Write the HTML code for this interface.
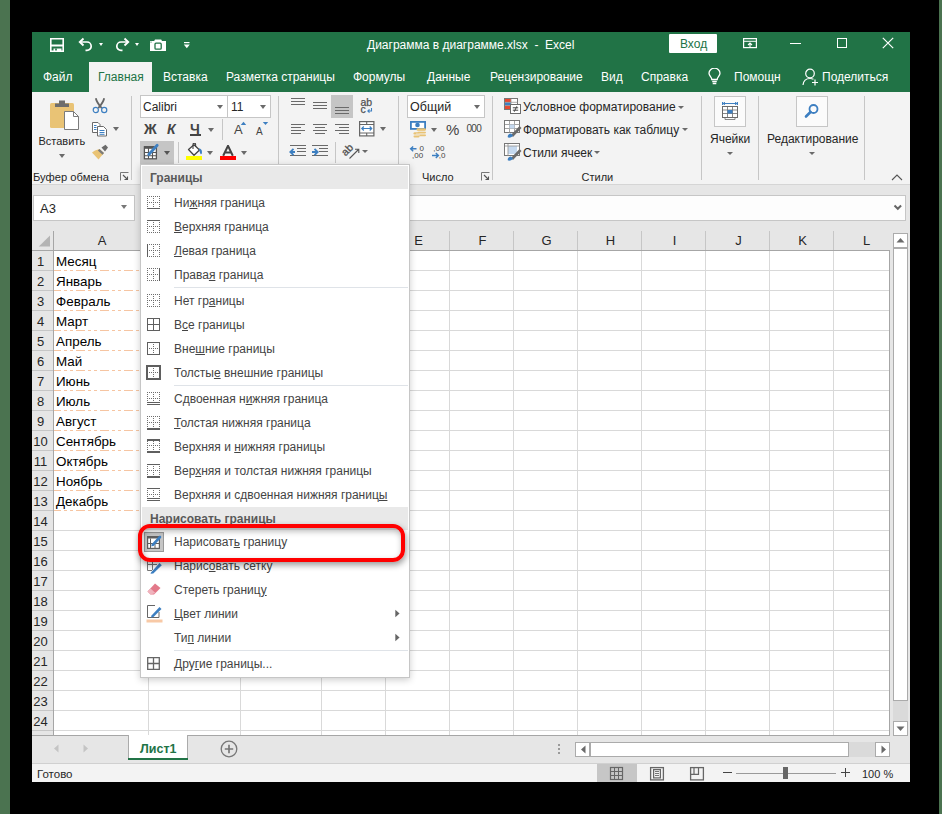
<!DOCTYPE html>
<html><head><meta charset="utf-8">
<style>
*{margin:0;padding:0;box-sizing:border-box}
html,body{width:942px;height:814px;overflow:hidden;background:#000;font-family:"Liberation Sans",sans-serif;position:relative}
div,span,svg{position:absolute}
.t{white-space:nowrap;line-height:14px;height:14px}
.wt{color:#fff;font-size:12px}
.rt{color:#262626;font-size:12px}
.sep{width:1px;background:#c6c6c6}
.dd{width:0;height:0;border-left:3.5px solid transparent;border-right:3.5px solid transparent;border-top:4px solid #6a6a6a}
.mi{color:#444;font-size:12px;left:174px;white-space:nowrap;line-height:14px;height:14px}
.u{text-decoration:underline;text-underline-offset:1px}
.cell{font-size:13.4px;color:#000;left:56px;white-space:nowrap;line-height:16px;height:16px}
.rn{font-size:13px;color:#262626;left:30px;width:21px;text-align:center;line-height:16px;height:16px}
.ch{font-size:13px;color:#262626;width:64px;text-align:center;top:233px;line-height:16px}
</style></head><body>
<!-- outer -->
<div style="left:0;top:0;width:10px;height:814px;background:#4b7350"></div>
<div style="left:939px;top:0;width:3px;height:814px;background:#4b7350"></div>
<!-- window bg -->
<div style="left:32px;top:32px;width:878px;height:750px;background:#e6e6e6"></div>
<!-- title bar -->
<div style="left:32px;top:32px;width:878px;height:60px;background:#217346"></div>
<!-- QAT -->
<svg style="left:49px;top:37px" width="16" height="16" viewBox="0 0 16 16"><path d="M1.8 1.8H14.2V14.2H1.8Z" fill="none" stroke="#fff" stroke-width="1.6"/><rect x="1" y="7.5" width="14" height="2" fill="#fff"/><path d="M4.5 15V11.5H12.5V15Z" fill="#fff"/><rect x="6.2" y="11.5" width="1.6" height="2" fill="#217346"/></svg>
<svg style="left:78px;top:37px" width="16" height="16" viewBox="0 0 16 16"><path d="M2 5H9A4.2 4.2 0 0 1 9 13.4H7.5" fill="none" stroke="#fff" stroke-width="1.7"/><path d="M5.5 1.5L1.8 5L5.5 8.5" fill="none" stroke="#fff" stroke-width="1.9"/></svg>
<div class="dd" style="left:99px;top:43px;border-top-color:#fff;border-left-width:2.5px;border-right-width:2.5px;border-top-width:3px"></div>
<svg style="left:114px;top:37px" width="16" height="16" viewBox="0 0 16 16"><path d="M14 5H7A4.2 4.2 0 0 0 7 13.4H8.5" fill="none" stroke="#fff" stroke-width="1.7"/><path d="M10.5 1.5L14.2 5L10.5 8.5" fill="none" stroke="#fff" stroke-width="1.9"/></svg>
<div class="dd" style="left:135px;top:43px;border-top-color:#fff;border-left-width:2.5px;border-right-width:2.5px;border-top-width:3px"></div>
<svg style="left:149px;top:39px" width="18" height="13" viewBox="0 0 18 13"><path d="M1 2H5.2L6 0.5H12.2L13 2H17V12H1Z" fill="#fff"/><rect x="6" y="4.2" width="6.2" height="6" rx="1" fill="none" stroke="#217346" stroke-width="1.3"/><rect x="1.5" y="2.6" width="1" height="1" fill="#217346"/></svg>
<svg style="left:183px;top:41px" width="8" height="9" viewBox="0 0 8 9"><rect x="1" y="1" width="5.5" height="1.2" fill="#fff"/><path d="M0.8 3.6H6.8L3.8 7.3Z" fill="#fff"/></svg>
<div class="t wt" style="left:367px;top:38px;">Диаграмма в диаграмме.xlsx&nbsp;&nbsp;-&nbsp;&nbsp;Excel</div>
<div style="left:669px;top:34px;width:48px;height:19px;background:#fff;border-radius:1px"></div>
<div class="t" style="left:680px;top:37px;color:#217346;font-size:12px">Вход</div>
<svg style="left:742px;top:37px" width="16" height="12" viewBox="0 0 16 12"><rect x="1.6" y="1.6" width="12.8" height="9" fill="none" stroke="#fff" stroke-width="1.2"/><path d="M1.6 4.3H14.4" stroke="#fff" stroke-width="1"/><path d="M8 10.5V6.2M6 8L8 6L10 8" fill="none" stroke="#fff" stroke-width="1.1"/></svg>
<div style="left:790px;top:43px;width:11px;height:1px;background:#fff"></div>
<div style="left:837px;top:38px;width:10px;height:10px;border:1px solid #fff"></div>
<svg style="left:882px;top:37px" width="12" height="12" viewBox="0 0 12 12"><path d="M0.8 0.8L11.2 11.2M11.2 0.8L0.8 11.2" stroke="#fff" stroke-width="1.2"/></svg>
<!-- tabs -->
<div style="left:89px;top:62px;width:63px;height:30px;background:#f3f3f3"></div>
<div class="t wt" style="left:43px;top:70px">Файл</div>
<div class="t" style="left:98px;top:70px;font-size:12px;color:#217346">Главная</div>
<div class="t wt" style="left:163px;top:70px">Вставка</div>
<div class="t wt" style="left:226px;top:70px">Разметка страницы</div>
<div class="t wt" style="left:353px;top:70px">Формулы</div>
<div class="t wt" style="left:427px;top:70px">Данные</div>
<div class="t wt" style="left:490px;top:70px">Рецензирование</div>
<div class="t wt" style="left:601px;top:70px">Вид</div>
<div class="t wt" style="left:641px;top:70px">Справка</div>
<svg style="left:707px;top:68px" width="15" height="17" viewBox="0 0 15 17"><path d="M4.8 11.5C4.8 9.3 2 8 2 5.3A5.5 5.1 0 0 1 13 5.3C13 8 10.2 9.3 10.2 11.5Z" fill="none" stroke="#fff" stroke-width="1.3"/><path d="M5.2 13.5H9.8M5.7 15.5H9.3" stroke="#fff" stroke-width="1.3"/></svg>
<div class="t wt" style="left:734px;top:70px">Помощн</div>
<svg style="left:802px;top:68px" width="17" height="18" viewBox="0 0 17 18"><circle cx="8" cy="5.5" r="4.3" fill="none" stroke="#fff" stroke-width="1.2"/><path d="M1 17C1.5 12.5 4 10.5 8 10.5C9.5 10.5 10.5 10.8 11.5 11.3" fill="none" stroke="#fff" stroke-width="1.2"/><path d="M13 11.5V17.5M10 14.5H16" stroke="#fff" stroke-width="1.2"/></svg>
<div class="t wt" style="left:822px;top:70px">Поделиться</div>
<!-- ribbon -->
<div style="left:32px;top:92px;width:878px;height:92px;background:#f3f3f3"></div>
<div style="left:32px;top:184px;width:878px;height:1px;background:#d5d5d5"></div>
<!-- clipboard group -->
<svg style="left:49px;top:99px" width="31" height="32" viewBox="0 0 31 32"><rect x="1" y="4" width="24" height="25" rx="1.5" fill="#e9c375"/><path d="M10 1.5H16V4.5H20V8H6V4.5H10Z" fill="#6d6d6d"/><path d="M15.5 12.5H24.5L29.5 17.5V30.5H15.5Z" fill="#fff" stroke="#7b7b7b" stroke-width="1"/><path d="M24.5 12.5V17.5H29.5" fill="none" stroke="#7b7b7b" stroke-width="1"/></svg>
<div class="t rt" style="left:38.5px;top:134px;font-size:11px">Вставить</div>
<div class="dd" style="left:59px;top:154px;border-left-width:3.5px;border-right-width:3.5px;border-top-width:4px"></div>
<svg style="left:92px;top:97px" width="16" height="17" viewBox="0 0 16 17"><path d="M3.8 1.2C4.5 4.5 7 8 9.8 11.2M12.2 1.2C11.5 4.5 9 8 6.2 11.2" fill="none" stroke="#666" stroke-width="1.8"/><circle cx="3.8" cy="13" r="2.6" fill="none" stroke="#3d7fc1" stroke-width="1.2"/><circle cx="12.2" cy="13" r="2.6" fill="none" stroke="#3d7fc1" stroke-width="1.2"/></svg>
<svg style="left:91px;top:121px" width="17" height="16" viewBox="0 0 17 16"><path d="M1.5 1.5H7L9 3.5V11.5H1.5Z" fill="#fff" stroke="#6b6b6b" stroke-width="1"/><path d="M6.5 5.5H12.5L15.5 8.5V15H6.5Z" fill="#fff" stroke="#6b6b6b" stroke-width="1"/><path d="M3 4.5H5.5M3 6.5H5.5M3 8.5H5.5M8.5 9.5H13.5M8.5 11.5H13.5M8.5 13.3H13.5" stroke="#3d7fc1" stroke-width="1"/></svg>
<div class="dd" style="left:113px;top:127px"></div>
<svg style="left:91px;top:144px" width="18" height="16" viewBox="0 0 18 16"><path d="M10.5 3.5L14.5 0.8L17 3.5L14 7.5Z" fill="#6b6b6b"/><path d="M8.5 5L13 9L9.5 13L7.5 15.5L1 8.5L4 6.5Z" fill="#e9c375"/><path d="M8.5 5L13 9L11.5 10.8L6.8 6.6Z" fill="#7b7b7b"/></svg>
<div class="t rt" style="left:33px;top:170px;font-size:11.2px">Буфер обмена</div>
<svg style="left:120px;top:172px" width="9" height="9" viewBox="0 0 9 9"><path d="M0.5 8.5V0.5H8.5" fill="none" stroke="#777" stroke-width="1"/><path d="M3 3L7.5 7.5M4.5 7.5H7.5V4.5" fill="none" stroke="#555" stroke-width="1.1"/></svg>
<div class="sep" style="left:131px;top:96px;height:84px"></div>
<!-- font group -->
<div style="left:140px;top:95px;width:131px;height:23px;background:#fff;border:1px solid #c6c6c6"></div>
<div style="left:227px;top:95px;width:1px;height:23px;background:#c6c6c6"></div>
<div class="t" style="left:143px;top:100px;font-size:12px;color:#262626">Calibri</div>
<div class="dd" style="left:217px;top:105px"></div>
<div class="t" style="left:231px;top:100px;font-size:12px;color:#262626">11</div>
<div class="dd" style="left:260px;top:105px"></div>
<div class="t" style="left:144px;top:120.5px;font-size:14px;font-weight:bold;color:#444;line-height:16px;height:16px">Ж</div>
<div class="t" style="left:167px;top:120.5px;font-size:14px;font-weight:bold;font-style:italic;color:#444;line-height:16px;height:16px">К</div>
<div class="t" style="left:190px;top:120.5px;font-size:14px;font-weight:bold;color:#444;line-height:16px;height:16px">Ч</div>
<div style="left:190px;top:134px;width:11px;height:1.5px;background:#444"></div>
<div class="dd" style="left:208px;top:128px"></div>
<div class="sep" style="left:222px;top:119px;height:21px"></div>
<div class="t" style="left:234px;top:123px;font-size:13px;color:#444;line-height:14px;height:14px">A</div>
<svg style="left:240px;top:121px" width="7" height="5" viewBox="0 0 7 5"><path d="M0.8 4L3.5 0.8L6.2 4Z" fill="#3d7fc1"/></svg>
<div class="t" style="left:256px;top:126px;font-size:10px;color:#444;line-height:11px;height:11px">A</div>
<svg style="left:262px;top:121px" width="7" height="5" viewBox="0 0 7 5"><path d="M0.8 1L3.5 4L6.2 1Z" fill="#3d7fc1"/></svg>
<div style="left:140px;top:141px;width:34px;height:23px;background:#c5c5c5"></div>
<svg style="left:143px;top:143px" width="18" height="17" viewBox="0 0 18 17"><rect x="1.4" y="3.8" width="12" height="12" fill="#fff" stroke="#555" stroke-width="1.3"/><rect x="1" y="3.2" width="10" height="2.6" fill="#555"/><path d="M5.5 4V16M9.5 10V16M1.4 9.5H13.4M1.4 12.8H13.4" stroke="#555" stroke-width="1.1"/><path d="M5.8 11.5L14.2 2.2" stroke="#3d7fc1" stroke-width="2.8" stroke-linecap="round"/><path d="M5 12.5L6 10.3L7.3 11.6Z" fill="#3d7fc1"/></svg>
<div class="dd" style="left:164px;top:151px;border-top-color:#555"></div>
<div class="sep" style="left:178px;top:142px;height:21px"></div>
<svg style="left:186px;top:143px" width="18" height="14" viewBox="0 0 18 14"><path d="M2.5 6.5L8 1.8L13.5 7L8 12.3Z" fill="#fff" stroke="#444" stroke-width="1.3" stroke-linejoin="round"/><path d="M7 6V1.5A1.3 1.3 0 0 1 9.6 1.5V4" fill="none" stroke="#444" stroke-width="1.1"/><path d="M13 5.5C15.5 5.5 16.3 8 15.8 10.5C15.5 11.3 14.6 11.4 14.3 10.6L13.2 7.2Z" fill="#3d7fc1"/></svg>
<div style="left:186px;top:156px;width:16px;height:4px;background:#ffff00"></div>
<div class="dd" style="left:207px;top:151px"></div>
<svg style="left:222px;top:145px" width="12" height="11" viewBox="0 0 12 11"><path d="M1.2 10.8L6 0.8L10.8 10.8M3.2 7.5H8.8" fill="none" stroke="#444" stroke-width="2"/></svg>
<div style="left:220px;top:156px;width:16px;height:4px;background:#ff0000"></div>
<div class="dd" style="left:241px;top:151px"></div>
<!-- alignment -->
<div class="sep" style="left:278px;top:96px;height:68px"></div>
<svg style="left:290px;top:96px" width="66" height="66" viewBox="0 0 66 66" shape-rendering="crispEdges">
 <g fill="#6a6a6a">
 <rect x="1" y="2" width="14" height="1"/><rect x="1" y="5" width="14" height="1"/><rect x="1" y="8" width="14" height="1"/>
 <rect x="23" y="6" width="14" height="1"/><rect x="23" y="9" width="14" height="1"/><rect x="23" y="12" width="14" height="1"/>
 </g>
</svg>
<div style="left:331px;top:95px;width:22px;height:23px;background:#c5c5c5"></div>
<svg style="left:290px;top:96px" width="90" height="66" viewBox="0 0 90 66" shape-rendering="crispEdges">
 <g fill="#6a6a6a">
 <rect x="45" y="11" width="14" height="1"/><rect x="45" y="14" width="14" height="1"/><rect x="45" y="17" width="14" height="1"/>
 <rect x="1" y="28" width="14" height="1"/><rect x="1" y="31" width="10" height="1"/><rect x="1" y="34" width="14" height="1"/><rect x="1" y="37" width="10" height="1"/>
 <rect x="23" y="28" width="14" height="1"/><rect x="25" y="31" width="10" height="1"/><rect x="23" y="34" width="14" height="1"/><rect x="25" y="37" width="10" height="1"/>
 <rect x="45" y="28" width="14" height="1"/><rect x="49" y="31" width="10" height="1"/><rect x="45" y="34" width="14" height="1"/><rect x="49" y="37" width="10" height="1"/>
 <rect x="0" y="49" width="16" height="1"/><rect x="7" y="52" width="9" height="1"/><rect x="7" y="55" width="9" height="1"/><rect x="0" y="59" width="16" height="1"/>
 <rect x="22" y="49" width="16" height="1"/><rect x="29" y="52" width="9" height="1"/><rect x="29" y="55" width="9" height="1"/><rect x="22" y="59" width="16" height="1"/>
 </g>
</svg>
<svg style="left:289px;top:146px" width="42" height="12" viewBox="0 0 42 12"><path d="M6 6H1.5M4.5 2.8L1.3 6L4.5 9.2" fill="none" stroke="#3d7fc1" stroke-width="1.8"/><path d="M23 6H28M25.5 2.8L28.7 6L25.5 9.2" fill="none" stroke="#3d7fc1" stroke-width="1.8"/></svg>
<svg style="left:359px;top:97px" width="16" height="18" viewBox="0 0 16 18"><text x="1.5" y="9" font-family="Liberation Sans" font-size="10.5" fill="#505050" stroke="#505050" stroke-width="0.25">ab</text><text x="1.5" y="16" font-family="Liberation Sans" font-size="10.5" fill="#505050" stroke="#505050" stroke-width="0.25">c</text><path d="M12.5 11V14H9M10.5 12.3L8.8 14L10.5 15.7" fill="none" stroke="#3d7fc1" stroke-width="1.1"/></svg>
<svg style="left:359px;top:121px" width="16" height="16" viewBox="0 0 16 16"><rect x="0.6" y="0.6" width="14.3" height="14.3" fill="#fff" stroke="#666" stroke-width="1.2"/><path d="M0.6 3.5H15M0.6 12H15M7.7 0.6V3.5M7.7 12V15" stroke="#666" stroke-width="1.1"/><path d="M3 7.5H12.5M4.8 5.5L2.8 7.5L4.8 9.5M10.7 5.5L12.7 7.5L10.7 9.5" fill="none" stroke="#3d7fc1" stroke-width="1.2"/></svg>
<div class="dd" style="left:380px;top:127px"></div>
<div class="sep" style="left:335px;top:142px;height:21px"></div>
<svg style="left:341px;top:142px" width="20" height="18" viewBox="0 0 20 18"><text x="0" y="0" transform="translate(4.5 14.5) rotate(-45)" font-family="Liberation Sans" font-size="10.5" fill="#505050" stroke="#505050" stroke-width="0.3">ab</text><path d="M8.5 16.5L17.5 7.5M14 7.2H17.8V11" fill="none" stroke="#555" stroke-width="1.1"/></svg>
<div class="dd" style="left:362px;top:150px;border-left-width:3px;border-right-width:3px;border-top-width:3.5px"></div>
<!-- number group -->
<div class="sep" style="left:398px;top:96px;height:68px"></div>
<div style="left:407px;top:95px;width:78px;height:23px;background:#fff;border:1px solid #c6c6c6"></div>
<div class="t" style="left:410px;top:100px;font-size:12.5px;color:#262626">Общий</div>
<div class="dd" style="left:474px;top:105px"></div>
<svg style="left:409px;top:120px" width="19" height="19" viewBox="0 0 19 19"><rect x="1.9" y="1.9" width="14.2" height="7" fill="#fff" stroke="#3d7fc1" stroke-width="1.8"/><circle cx="8.5" cy="5" r="2.3" fill="#3d7fc1"/><g fill="#e9c375"><rect x="7.5" y="8.3" width="9.5" height="2.6" rx="1.3"/><rect x="8.5" y="11.5" width="8.5" height="2.2" rx="1.1"/><rect x="9.5" y="14.2" width="7.5" height="2" rx="1"/><rect x="4.5" y="12.3" width="6" height="2.4" rx="1.2"/><rect x="4.5" y="15.3" width="6" height="2.2" rx="1.1"/></g><g stroke="#f3f3f3" stroke-width="0.6"><path d="M7 11.2H17M7 13.9H17M4 15H11"/></g></svg>
<div class="dd" style="left:431px;top:128px"></div>
<div class="t" style="left:446px;top:122px;font-size:15px;color:#444;line-height:16px;height:16px">%</div>
<div class="t" style="left:466.5px;top:122px;font-size:10px;color:#444;line-height:14px;letter-spacing:-0.7px">000</div>
<svg style="left:409px;top:144px" width="40" height="16" viewBox="0 0 40 16"><path d="M7.5 4.8H1.8M4.2 2.4L1.6 4.8L4.2 7.2" fill="none" stroke="#3d7fc1" stroke-width="1.4"/><text x="10.5" y="6.7" font-family="Liberation Sans" font-size="8" fill="#444">0</text><text x="3" y="13.8" font-family="Liberation Sans" font-size="8" fill="#444">,00</text><text x="24.3" y="6.7" font-family="Liberation Sans" font-size="8" fill="#444">,00</text><text x="29.8" y="13.8" font-family="Liberation Sans" font-size="8" fill="#444">,0</text><path d="M23 11.5H29.2M26.8 9.1L29.4 11.5L26.8 13.9" fill="none" stroke="#3d7fc1" stroke-width="1.4"/></svg>
<div class="t rt" style="left:422px;top:170px;font-size:11px">Число</div>
<svg style="left:481px;top:172px" width="9" height="9" viewBox="0 0 9 9"><path d="M0.5 8.5V0.5H8.5" fill="none" stroke="#777" stroke-width="1"/><path d="M3 3L7.5 7.5M4.5 7.5H7.5V4.5" fill="none" stroke="#555" stroke-width="1.1"/></svg>
<div class="sep" style="left:492px;top:96px;height:84px"></div>
<!-- styles group -->
<svg style="left:504px;top:98px" width="17" height="16" viewBox="0 0 17 16"><rect x="0.5" y="0.5" width="13" height="11" fill="#fff" stroke="#777" stroke-width="1"/><rect x="1" y="1" width="6" height="3.3" fill="#e8472e"/><rect x="1" y="4.3" width="6" height="3.3" fill="#3d7fc1"/><rect x="1" y="7.6" width="6" height="3.4" fill="#e8472e"/><path d="M7 1V11.5M1 4.3H13.5M1 7.6H13.5" stroke="#999" stroke-width="0.8"/><rect x="6.5" y="6.5" width="10" height="9" fill="#fff" stroke="#6b6b6b" stroke-width="1"/><path d="M8.8 9.8H14.2M8.8 12.2H14.2M12.8 8.3L10.3 13.7" stroke="#444" stroke-width="1"/></svg>
<div class="t rt" style="left:523px;top:100px">Условное форматирование</div>
<div class="dd" style="left:677.5px;top:106px;border-left-width:3px;border-right-width:3px;border-top-width:3.5px"></div>
<svg style="left:504px;top:120px" width="19" height="18" viewBox="0 0 19 18"><rect x="0.5" y="0.5" width="15" height="12" fill="#fff" stroke="#777" stroke-width="1"/><path d="M1 4.5H15.5M1 8.5H15.5M5.5 1V12.5M10.5 1V12.5" stroke="#999" stroke-width="0.9"/><rect x="5.5" y="4.5" width="5" height="4" fill="#c5d9ef"/><path d="M7 15L15.5 6L17.5 8L9 17Z" fill="#6b6b6b"/><path d="M4 17.5C3 16 4.5 13.5 7 13.5L9 15.5C8.5 17 6 18 4 17.5Z" fill="#3d7fc1"/></svg>
<div class="t rt" style="left:523px;top:123px">Форматировать как таблицу</div>
<div class="dd" style="left:681.5px;top:128px;border-left-width:3px;border-right-width:3px;border-top-width:3.5px"></div>
<svg style="left:504px;top:143px" width="19" height="18" viewBox="0 0 19 18"><rect x="0.5" y="0.5" width="15" height="12" fill="#fff" stroke="#777" stroke-width="1"/><rect x="4" y="3" width="9" height="8" fill="#c5d9ef"/><path d="M1 3H15.5M4 1V12.5" stroke="#999" stroke-width="0.9"/><path d="M7 15L15.5 6L17.5 8L9 17Z" fill="#6b6b6b"/><path d="M4 17.5C3 16 4.5 13.5 7 13.5L9 15.5C8.5 17 6 18 4 17.5Z" fill="#3d7fc1"/></svg>
<div class="t rt" style="left:523px;top:146px">Стили ячеек</div>
<div class="dd" style="left:593.5px;top:151px;border-left-width:3px;border-right-width:3px;border-top-width:3.5px"></div>
<div class="t rt" style="left:581.5px;top:170px;font-size:11px">Стили</div>
<div class="sep" style="left:701px;top:96px;height:84px"></div>
<!-- cells -->
<div style="left:714px;top:96px;width:32px;height:31px;border:1px solid #c6c6c6;background:#fbfbfb"></div>
<svg style="left:721px;top:101px" width="18" height="19" viewBox="0 0 18 19"><path d="M1.5 1V4M16.5 1V4M2 2.5H16M4 1.3L2 2.5L4 3.7M14 1.3L16 2.5L14 3.7" fill="none" stroke="#3d7fc1" stroke-width="1"/><rect x="1.5" y="5.5" width="15" height="11" fill="#fff" stroke="#6b6b6b" stroke-width="1"/><path d="M1.5 9H16.5M1.5 12.5H16.5M6.5 5.5V16.5M11.5 5.5V16.5" stroke="#6b6b6b" stroke-width="0.8"/><rect x="6.5" y="9" width="5" height="3.5" fill="#3d7fc1"/><path d="M4 16.5V18.5H14V16.5" fill="none" stroke="#6b6b6b" stroke-width="0.8"/></svg>
<div class="t rt" style="left:710px;top:132px">Ячейки</div>
<div class="dd" style="left:727px;top:152px;border-left-width:3px;border-right-width:3px;border-top-width:3.5px"></div>
<div class="sep" style="left:758px;top:96px;height:84px"></div>
<!-- editing -->
<div style="left:796px;top:96px;width:32px;height:31px;border:1px solid #c6c6c6;background:#fbfbfb"></div>
<svg style="left:804px;top:103px" width="16" height="16" viewBox="0 0 16 16"><circle cx="9.5" cy="6" r="4" fill="none" stroke="#3d7fc1" stroke-width="1.8"/><path d="M6.5 9L2 13.5" stroke="#3d7fc1" stroke-width="2.6" stroke-linecap="round"/></svg>
<div class="t rt" style="left:767px;top:132px">Редактирование</div>
<div class="dd" style="left:808.5px;top:152px;border-left-width:3px;border-right-width:3px;border-top-width:3.5px"></div>
<div class="sep" style="left:864px;top:96px;height:84px"></div>
<svg style="left:891px;top:174px" width="12" height="7" viewBox="0 0 12 7"><path d="M1 6L6 1L11 6" fill="none" stroke="#555" stroke-width="1.1"/></svg>
<!-- formula bar row -->
<div style="left:33px;top:195px;width:102px;height:26px;background:#fff;border:1px solid #c6c6c6"></div>
<div class="t" style="left:40px;top:201px;font-size:13px;color:#262626;line-height:15px;height:15px">A3</div>
<div class="dd" style="left:121px;top:205px;border-left-width:3.5px;border-right-width:3.5px;border-top-width:4px;border-top-color:#777"></div>
<div style="left:145px;top:195px;width:761px;height:26px;background:#fdfdfd;border:1px solid #c6c6c6"></div>
<svg style="left:893px;top:204px" width="10" height="7" viewBox="0 0 10 7"><path d="M1.5 1.5L4.8 4.8L8.1 1.5" fill="none" stroke="#666" stroke-width="2"/></svg>
<!-- grid -->
<div style="left:53px;top:250px;width:837px;height:485px;background:#fff"></div>
<div style="left:32px;top:250px;width:21px;height:485px;background:#e6e6e6"></div>
<div style="left:53px;top:270px;width:836px;height:1px;background:#d9d9d9"></div>
<div style="left:32px;top:270px;width:21px;height:1px;background:#c6c6c6"></div>
<div style="left:53px;top:290px;width:836px;height:1px;background:#d9d9d9"></div>
<div style="left:32px;top:290px;width:21px;height:1px;background:#c6c6c6"></div>
<div style="left:53px;top:310px;width:836px;height:1px;background:#d9d9d9"></div>
<div style="left:32px;top:310px;width:21px;height:1px;background:#c6c6c6"></div>
<div style="left:53px;top:330px;width:836px;height:1px;background:#d9d9d9"></div>
<div style="left:32px;top:330px;width:21px;height:1px;background:#c6c6c6"></div>
<div style="left:53px;top:350px;width:836px;height:1px;background:#d9d9d9"></div>
<div style="left:32px;top:350px;width:21px;height:1px;background:#c6c6c6"></div>
<div style="left:53px;top:370px;width:836px;height:1px;background:#d9d9d9"></div>
<div style="left:32px;top:370px;width:21px;height:1px;background:#c6c6c6"></div>
<div style="left:53px;top:390px;width:836px;height:1px;background:#d9d9d9"></div>
<div style="left:32px;top:390px;width:21px;height:1px;background:#c6c6c6"></div>
<div style="left:53px;top:410px;width:836px;height:1px;background:#d9d9d9"></div>
<div style="left:32px;top:410px;width:21px;height:1px;background:#c6c6c6"></div>
<div style="left:53px;top:430px;width:836px;height:1px;background:#d9d9d9"></div>
<div style="left:32px;top:430px;width:21px;height:1px;background:#c6c6c6"></div>
<div style="left:53px;top:450px;width:836px;height:1px;background:#d9d9d9"></div>
<div style="left:32px;top:450px;width:21px;height:1px;background:#c6c6c6"></div>
<div style="left:53px;top:470px;width:836px;height:1px;background:#d9d9d9"></div>
<div style="left:32px;top:470px;width:21px;height:1px;background:#c6c6c6"></div>
<div style="left:53px;top:490px;width:836px;height:1px;background:#d9d9d9"></div>
<div style="left:32px;top:490px;width:21px;height:1px;background:#c6c6c6"></div>
<div style="left:53px;top:510px;width:836px;height:1px;background:#d9d9d9"></div>
<div style="left:32px;top:510px;width:21px;height:1px;background:#c6c6c6"></div>
<div style="left:53px;top:530px;width:836px;height:1px;background:#d9d9d9"></div>
<div style="left:32px;top:530px;width:21px;height:1px;background:#c6c6c6"></div>
<div style="left:53px;top:550px;width:836px;height:1px;background:#d9d9d9"></div>
<div style="left:32px;top:550px;width:21px;height:1px;background:#c6c6c6"></div>
<div style="left:53px;top:570px;width:836px;height:1px;background:#d9d9d9"></div>
<div style="left:32px;top:570px;width:21px;height:1px;background:#c6c6c6"></div>
<div style="left:53px;top:590px;width:836px;height:1px;background:#d9d9d9"></div>
<div style="left:32px;top:590px;width:21px;height:1px;background:#c6c6c6"></div>
<div style="left:53px;top:610px;width:836px;height:1px;background:#d9d9d9"></div>
<div style="left:32px;top:610px;width:21px;height:1px;background:#c6c6c6"></div>
<div style="left:53px;top:630px;width:836px;height:1px;background:#d9d9d9"></div>
<div style="left:32px;top:630px;width:21px;height:1px;background:#c6c6c6"></div>
<div style="left:53px;top:650px;width:836px;height:1px;background:#d9d9d9"></div>
<div style="left:32px;top:650px;width:21px;height:1px;background:#c6c6c6"></div>
<div style="left:53px;top:670px;width:836px;height:1px;background:#d9d9d9"></div>
<div style="left:32px;top:670px;width:21px;height:1px;background:#c6c6c6"></div>
<div style="left:53px;top:690px;width:836px;height:1px;background:#d9d9d9"></div>
<div style="left:32px;top:690px;width:21px;height:1px;background:#c6c6c6"></div>
<div style="left:53px;top:710px;width:836px;height:1px;background:#d9d9d9"></div>
<div style="left:32px;top:710px;width:21px;height:1px;background:#c6c6c6"></div>
<div style="left:53px;top:730px;width:836px;height:1px;background:#d9d9d9"></div>
<div style="left:32px;top:730px;width:21px;height:1px;background:#c6c6c6"></div>
<div style="left:148px;top:251px;width:1px;height:484px;background:#d9d9d9"></div>
<div style="left:148px;top:231px;width:1px;height:19px;background:#c6c6c6"></div>
<div style="left:240px;top:251px;width:1px;height:484px;background:#d9d9d9"></div>
<div style="left:240px;top:231px;width:1px;height:19px;background:#c6c6c6"></div>
<div style="left:321px;top:251px;width:1px;height:484px;background:#d9d9d9"></div>
<div style="left:321px;top:231px;width:1px;height:19px;background:#c6c6c6"></div>
<div style="left:385px;top:251px;width:1px;height:484px;background:#d9d9d9"></div>
<div style="left:385px;top:231px;width:1px;height:19px;background:#c6c6c6"></div>
<div style="left:449px;top:251px;width:1px;height:484px;background:#d9d9d9"></div>
<div style="left:449px;top:231px;width:1px;height:19px;background:#c6c6c6"></div>
<div style="left:513px;top:251px;width:1px;height:484px;background:#d9d9d9"></div>
<div style="left:513px;top:231px;width:1px;height:19px;background:#c6c6c6"></div>
<div style="left:577px;top:251px;width:1px;height:484px;background:#d9d9d9"></div>
<div style="left:577px;top:231px;width:1px;height:19px;background:#c6c6c6"></div>
<div style="left:641px;top:251px;width:1px;height:484px;background:#d9d9d9"></div>
<div style="left:641px;top:231px;width:1px;height:19px;background:#c6c6c6"></div>
<div style="left:705px;top:251px;width:1px;height:484px;background:#d9d9d9"></div>
<div style="left:705px;top:231px;width:1px;height:19px;background:#c6c6c6"></div>
<div style="left:769px;top:251px;width:1px;height:484px;background:#d9d9d9"></div>
<div style="left:769px;top:231px;width:1px;height:19px;background:#c6c6c6"></div>
<div style="left:833px;top:251px;width:1px;height:484px;background:#d9d9d9"></div>
<div style="left:833px;top:231px;width:1px;height:19px;background:#c6c6c6"></div>
<div style="left:32px;top:250px;width:858px;height:1px;background:#a6a6a6"></div>
<div style="left:53px;top:231px;width:1px;height:504px;background:#a6a6a6"></div>
<svg style="left:38px;top:235px" width="13" height="12" viewBox="0 0 13 12"><path d="M12 0.5V11.5H0.8Z" fill="#b4b4b4"/></svg>
<div style="left:889px;top:250px;width:1px;height:486px;background:#a6a6a6"></div>
<div style="left:32px;top:735px;width:858px;height:1px;background:#a6a6a6"></div>
<div class="ch" style="left:54.5px;width:95px">A</div>
<div class="ch" style="left:386.5px;width:64px">E</div>
<div class="ch" style="left:450.5px;width:64px">F</div>
<div class="ch" style="left:514.5px;width:64px">G</div>
<div class="ch" style="left:578.5px;width:64px">H</div>
<div class="ch" style="left:642.5px;width:64px">I</div>
<div class="ch" style="left:706.5px;width:64px">J</div>
<div class="ch" style="left:770.5px;width:64px">K</div>
<div class="ch" style="left:834.5px;width:64px">L</div>
<div class="rn" style="top:254px">1</div>
<div class="rn" style="top:274px">2</div>
<div class="rn" style="top:294px">3</div>
<div class="rn" style="top:314px">4</div>
<div class="rn" style="top:334px">5</div>
<div class="rn" style="top:354px">6</div>
<div class="rn" style="top:374px">7</div>
<div class="rn" style="top:394px">8</div>
<div class="rn" style="top:414px">9</div>
<div class="rn" style="top:434px">10</div>
<div class="rn" style="top:454px">11</div>
<div class="rn" style="top:474px">12</div>
<div class="rn" style="top:494px">13</div>
<div class="rn" style="top:514px">14</div>
<div class="rn" style="top:534px">15</div>
<div class="rn" style="top:554px">16</div>
<div class="rn" style="top:574px">17</div>
<div class="rn" style="top:594px">18</div>
<div class="rn" style="top:614px">19</div>
<div class="rn" style="top:634px">20</div>
<div class="rn" style="top:654px">21</div>
<div class="rn" style="top:674px">22</div>
<div class="rn" style="top:694px">23</div>
<div class="rn" style="top:714px">24</div>
<div class="cell" style="top:254px">Месяц</div>
<div style="left:54px;top:270px;width:87px;height:1px;background:repeating-linear-gradient(90deg,#f6c5a2 0 7px,#fff 7px 10px,#f6c5a2 10px 13px,#fff 13px 16px,#f6c5a2 16px 19px,#fff 19px 22px,#f6c5a2 22px 24px)"></div>
<div class="cell" style="top:274px">Январь</div>
<div style="left:54px;top:290px;width:87px;height:1px;background:repeating-linear-gradient(90deg,#f6c5a2 0 7px,#fff 7px 10px,#f6c5a2 10px 13px,#fff 13px 16px,#f6c5a2 16px 19px,#fff 19px 22px,#f6c5a2 22px 24px)"></div>
<div class="cell" style="top:294px">Февраль</div>
<div style="left:54px;top:310px;width:87px;height:1px;background:repeating-linear-gradient(90deg,#f6c5a2 0 7px,#fff 7px 10px,#f6c5a2 10px 13px,#fff 13px 16px,#f6c5a2 16px 19px,#fff 19px 22px,#f6c5a2 22px 24px)"></div>
<div class="cell" style="top:314px">Март</div>
<div style="left:54px;top:330px;width:87px;height:1px;background:repeating-linear-gradient(90deg,#f6c5a2 0 7px,#fff 7px 10px,#f6c5a2 10px 13px,#fff 13px 16px,#f6c5a2 16px 19px,#fff 19px 22px,#f6c5a2 22px 24px)"></div>
<div class="cell" style="top:334px">Апрель</div>
<div style="left:54px;top:350px;width:87px;height:1px;background:repeating-linear-gradient(90deg,#f6c5a2 0 7px,#fff 7px 10px,#f6c5a2 10px 13px,#fff 13px 16px,#f6c5a2 16px 19px,#fff 19px 22px,#f6c5a2 22px 24px)"></div>
<div class="cell" style="top:354px">Май</div>
<div style="left:54px;top:370px;width:87px;height:1px;background:repeating-linear-gradient(90deg,#f6c5a2 0 7px,#fff 7px 10px,#f6c5a2 10px 13px,#fff 13px 16px,#f6c5a2 16px 19px,#fff 19px 22px,#f6c5a2 22px 24px)"></div>
<div class="cell" style="top:374px">Июнь</div>
<div style="left:54px;top:390px;width:87px;height:1px;background:repeating-linear-gradient(90deg,#f6c5a2 0 7px,#fff 7px 10px,#f6c5a2 10px 13px,#fff 13px 16px,#f6c5a2 16px 19px,#fff 19px 22px,#f6c5a2 22px 24px)"></div>
<div class="cell" style="top:394px">Июль</div>
<div style="left:54px;top:410px;width:87px;height:1px;background:repeating-linear-gradient(90deg,#f6c5a2 0 7px,#fff 7px 10px,#f6c5a2 10px 13px,#fff 13px 16px,#f6c5a2 16px 19px,#fff 19px 22px,#f6c5a2 22px 24px)"></div>
<div class="cell" style="top:414px">Август</div>
<div style="left:54px;top:430px;width:87px;height:1px;background:repeating-linear-gradient(90deg,#f6c5a2 0 7px,#fff 7px 10px,#f6c5a2 10px 13px,#fff 13px 16px,#f6c5a2 16px 19px,#fff 19px 22px,#f6c5a2 22px 24px)"></div>
<div class="cell" style="top:434px">Сентябрь</div>
<div style="left:54px;top:450px;width:87px;height:1px;background:repeating-linear-gradient(90deg,#f6c5a2 0 7px,#fff 7px 10px,#f6c5a2 10px 13px,#fff 13px 16px,#f6c5a2 16px 19px,#fff 19px 22px,#f6c5a2 22px 24px)"></div>
<div class="cell" style="top:454px">Октябрь</div>
<div style="left:54px;top:470px;width:87px;height:1px;background:repeating-linear-gradient(90deg,#f6c5a2 0 7px,#fff 7px 10px,#f6c5a2 10px 13px,#fff 13px 16px,#f6c5a2 16px 19px,#fff 19px 22px,#f6c5a2 22px 24px)"></div>
<div class="cell" style="top:474px">Ноябрь</div>
<div style="left:54px;top:490px;width:87px;height:1px;background:repeating-linear-gradient(90deg,#f6c5a2 0 7px,#fff 7px 10px,#f6c5a2 10px 13px,#fff 13px 16px,#f6c5a2 16px 19px,#fff 19px 22px,#f6c5a2 22px 24px)"></div>
<div class="cell" style="top:494px">Декабрь</div>
<div style="left:54px;top:510px;width:87px;height:1px;background:repeating-linear-gradient(90deg,#f6c5a2 0 7px,#fff 7px 10px,#f6c5a2 10px 13px,#fff 13px 16px,#f6c5a2 16px 19px,#fff 19px 22px,#f6c5a2 22px 24px)"></div>
<!-- vertical scrollbar -->
<div style="left:893px;top:233px;width:15px;height:15px;background:#fff;border:1px solid #ababab"></div>
<svg style="left:896px;top:237px" width="9" height="6" viewBox="0 0 9 6"><path d="M0.5 5.5L4.5 1L8.5 5.5Z" fill="#6a6a6a"/></svg>
<div style="left:893px;top:248px;width:15px;height:473px;background:#dadada"></div>
<div style="left:893px;top:248px;width:15px;height:453px;background:#fff;border:1px solid #ababab"></div>
<div style="left:893px;top:721px;width:15px;height:15px;background:#fff;border:1px solid #ababab"></div>
<svg style="left:896px;top:726px" width="9" height="6" viewBox="0 0 9 6"><path d="M0.5 0.5L4.5 5L8.5 0.5Z" fill="#6a6a6a"/></svg>
<!-- tab bar -->
<div style="left:32px;top:736px;width:878px;height:27px;background:#e6e6e6"></div>
<svg style="left:53px;top:744px" width="6" height="9" viewBox="0 0 6 9"><path d="M5.5 0.5L1 4.5L5.5 8.5Z" fill="#c4c4c4"/></svg>
<svg style="left:83px;top:744px" width="6" height="9" viewBox="0 0 6 9"><path d="M0.5 0.5L5 4.5L0.5 8.5Z" fill="#c4c4c4"/></svg>
<div style="left:128px;top:735px;width:60px;height:25px;background:#fff;border-left:1px solid #ababab;border-right:1px solid #ababab"></div>
<div style="left:128px;top:758px;width:60px;height:2px;background:#217346"></div>
<div class="t" style="left:140px;top:742px;font-size:12.5px;font-weight:bold;color:#217346;line-height:15px;height:15px">Лист1</div>
<svg style="left:220px;top:740px" width="18" height="18" viewBox="0 0 18 18"><circle cx="9" cy="9" r="7.8" fill="none" stroke="#777" stroke-width="1.3"/><path d="M9 4.8V13.2M4.8 9H13.2" stroke="#777" stroke-width="1.7"/></svg>
<div style="left:558px;top:744px;width:2px;height:2px;background:#9a9a9a"></div>
<div style="left:558px;top:748px;width:2px;height:2px;background:#9a9a9a"></div>
<div style="left:558px;top:752px;width:2px;height:2px;background:#9a9a9a"></div>
<div style="left:575px;top:742px;width:15px;height:15px;background:#fff;border:1px solid #ababab"></div>
<svg style="left:580px;top:745px" width="6" height="9" viewBox="0 0 6 9"><path d="M5.5 0.5L1 4.5L5.5 8.5Z" fill="#6a6a6a"/></svg>
<div style="left:590px;top:742px;width:286px;height:15px;background:#dadada"></div>
<div style="left:590px;top:742px;width:259px;height:15px;background:#fff;border:1px solid #ababab"></div>
<div style="left:875px;top:742px;width:15px;height:15px;background:#fff;border:1px solid #ababab"></div>
<svg style="left:881px;top:745px" width="6" height="9" viewBox="0 0 6 9"><path d="M0.5 0.5L5 4.5L0.5 8.5Z" fill="#6a6a6a"/></svg>
<!-- status bar -->
<div style="left:32px;top:763px;width:878px;height:1px;background:#d0d0d0"></div>
<div style="left:32px;top:764px;width:878px;height:18px;background:#f3f3f3"></div>
<div class="t" style="left:37px;top:767px;font-size:11.5px;color:#262626">Готово</div>
<div style="left:597px;top:764px;width:40px;height:18px;background:#c6c6c6"></div>
<svg style="left:609px;top:766px" width="15" height="15" viewBox="0 0 15 15"><rect x="1.5" y="1.5" width="12" height="12" fill="none" stroke="#666" stroke-width="1.2"/><path d="M5.5 1.5V13.5M9.5 1.5V13.5M1.5 5.5H13.5M1.5 9.5H13.5" stroke="#666" stroke-width="1"/></svg>
<svg style="left:649px;top:766px" width="16" height="15" viewBox="0 0 16 15"><rect x="1.6" y="1.6" width="12.8" height="12.3" fill="none" stroke="#666" stroke-width="1.3"/><rect x="4.6" y="3.6" width="6.8" height="8.3" fill="none" stroke="#666" stroke-width="1.2"/><path d="M6 5.5H10M6 7.5H10M6 9.5H10" stroke="#666" stroke-width="0.9"/></svg>
<svg style="left:689px;top:766px" width="16" height="15" viewBox="0 0 16 15"><rect x="1.6" y="1.6" width="12.8" height="12.3" fill="none" stroke="#666" stroke-width="1.3"/><path d="M1.6 8.3H9.5V1.6M5 1.6V8.3" fill="none" stroke="#666" stroke-width="1.2"/></svg>
<div style="left:723px;top:772px;width:9px;height:1px;background:#444"></div>
<div style="left:736px;top:773px;width:100px;height:1px;background:#9a9a9a"></div>
<div style="left:783px;top:767px;width:5px;height:12px;background:#666"></div>
<div style="left:841px;top:772px;width:9px;height:1px;background:#444"></div>
<div style="left:845px;top:768px;width:1px;height:9px;background:#444"></div>
<div class="t" style="left:862px;top:767px;font-size:11px;color:#262626">100 %</div>
<!-- menu -->
<div style="left:140px;top:164px;width:270px;height:514px;background:#fff;border:1px solid #c6c6c6;box-shadow:0 2px 7px rgba(0,0,0,0.2)"></div>
<div style="left:142px;top:166px;width:266px;height:23px;background:#e9e9e9"></div>
<div class="t" style="left:150px;top:171px;font-size:12px;font-weight:bold;color:#595959">Границы</div>
<div class="mi" style="top:196px">Ни<span class="u" style="position:static">ж</span>няя граница</div>
<svg style="left:147px;top:196px" width="14" height="15" viewBox="0 0 14 15" shape-rendering="crispEdges"><g fill="#6e6e6e"><rect x="0" y="0" width="1" height="1"/><rect x="0" y="2" width="1" height="1"/><rect x="0" y="4" width="1" height="1"/><rect x="0" y="6" width="1" height="1"/><rect x="0" y="8" width="1" height="1"/><rect x="0" y="10" width="1" height="1"/><rect x="2" y="0" width="1" height="1"/><rect x="2" y="6" width="1" height="1"/><rect x="4" y="0" width="1" height="1"/><rect x="4" y="6" width="1" height="1"/><rect x="6" y="0" width="1" height="1"/><rect x="6" y="2" width="1" height="1"/><rect x="6" y="4" width="1" height="1"/><rect x="6" y="6" width="1" height="1"/><rect x="6" y="8" width="1" height="1"/><rect x="6" y="10" width="1" height="1"/><rect x="8" y="0" width="1" height="1"/><rect x="8" y="6" width="1" height="1"/><rect x="10" y="0" width="1" height="1"/><rect x="10" y="6" width="1" height="1"/><rect x="12" y="0" width="1" height="1"/><rect x="12" y="2" width="1" height="1"/><rect x="12" y="4" width="1" height="1"/><rect x="12" y="6" width="1" height="1"/><rect x="12" y="8" width="1" height="1"/><rect x="12" y="10" width="1" height="1"/></g><rect x="0" y="12" width="13" height="1" fill="#5f5f5f"/></svg>
<div class="mi" style="top:220px"><span class="u" style="position:static">В</span>ерхняя граница</div>
<svg style="left:147px;top:220px" width="14" height="15" viewBox="0 0 14 15" shape-rendering="crispEdges"><g fill="#6e6e6e"><rect x="0" y="2" width="1" height="1"/><rect x="0" y="4" width="1" height="1"/><rect x="0" y="6" width="1" height="1"/><rect x="0" y="8" width="1" height="1"/><rect x="0" y="10" width="1" height="1"/><rect x="0" y="12" width="1" height="1"/><rect x="2" y="6" width="1" height="1"/><rect x="2" y="12" width="1" height="1"/><rect x="4" y="6" width="1" height="1"/><rect x="4" y="12" width="1" height="1"/><rect x="6" y="2" width="1" height="1"/><rect x="6" y="4" width="1" height="1"/><rect x="6" y="6" width="1" height="1"/><rect x="6" y="8" width="1" height="1"/><rect x="6" y="10" width="1" height="1"/><rect x="6" y="12" width="1" height="1"/><rect x="8" y="6" width="1" height="1"/><rect x="8" y="12" width="1" height="1"/><rect x="10" y="6" width="1" height="1"/><rect x="10" y="12" width="1" height="1"/><rect x="12" y="2" width="1" height="1"/><rect x="12" y="4" width="1" height="1"/><rect x="12" y="6" width="1" height="1"/><rect x="12" y="8" width="1" height="1"/><rect x="12" y="10" width="1" height="1"/><rect x="12" y="12" width="1" height="1"/></g><rect x="0" y="0" width="13" height="1" fill="#5f5f5f"/></svg>
<div class="mi" style="top:244px"><span class="u" style="position:static">Л</span>евая граница</div>
<svg style="left:147px;top:244px" width="14" height="15" viewBox="0 0 14 15" shape-rendering="crispEdges"><g fill="#6e6e6e"><rect x="2" y="0" width="1" height="1"/><rect x="2" y="6" width="1" height="1"/><rect x="2" y="12" width="1" height="1"/><rect x="4" y="0" width="1" height="1"/><rect x="4" y="6" width="1" height="1"/><rect x="4" y="12" width="1" height="1"/><rect x="6" y="0" width="1" height="1"/><rect x="6" y="2" width="1" height="1"/><rect x="6" y="4" width="1" height="1"/><rect x="6" y="6" width="1" height="1"/><rect x="6" y="8" width="1" height="1"/><rect x="6" y="10" width="1" height="1"/><rect x="6" y="12" width="1" height="1"/><rect x="8" y="0" width="1" height="1"/><rect x="8" y="6" width="1" height="1"/><rect x="8" y="12" width="1" height="1"/><rect x="10" y="0" width="1" height="1"/><rect x="10" y="6" width="1" height="1"/><rect x="10" y="12" width="1" height="1"/><rect x="12" y="0" width="1" height="1"/><rect x="12" y="2" width="1" height="1"/><rect x="12" y="4" width="1" height="1"/><rect x="12" y="6" width="1" height="1"/><rect x="12" y="8" width="1" height="1"/><rect x="12" y="10" width="1" height="1"/><rect x="12" y="12" width="1" height="1"/></g><rect x="0" y="0" width="1" height="13" fill="#5f5f5f"/></svg>
<div class="mi" style="top:268px">Права<span class="u" style="position:static">я</span> граница</div>
<svg style="left:147px;top:268px" width="14" height="15" viewBox="0 0 14 15" shape-rendering="crispEdges"><g fill="#6e6e6e"><rect x="0" y="0" width="1" height="1"/><rect x="0" y="2" width="1" height="1"/><rect x="0" y="4" width="1" height="1"/><rect x="0" y="6" width="1" height="1"/><rect x="0" y="8" width="1" height="1"/><rect x="0" y="10" width="1" height="1"/><rect x="0" y="12" width="1" height="1"/><rect x="2" y="0" width="1" height="1"/><rect x="2" y="6" width="1" height="1"/><rect x="2" y="12" width="1" height="1"/><rect x="4" y="0" width="1" height="1"/><rect x="4" y="6" width="1" height="1"/><rect x="4" y="12" width="1" height="1"/><rect x="6" y="0" width="1" height="1"/><rect x="6" y="2" width="1" height="1"/><rect x="6" y="4" width="1" height="1"/><rect x="6" y="6" width="1" height="1"/><rect x="6" y="8" width="1" height="1"/><rect x="6" y="10" width="1" height="1"/><rect x="6" y="12" width="1" height="1"/><rect x="8" y="0" width="1" height="1"/><rect x="8" y="6" width="1" height="1"/><rect x="8" y="12" width="1" height="1"/><rect x="10" y="0" width="1" height="1"/><rect x="10" y="6" width="1" height="1"/><rect x="10" y="12" width="1" height="1"/></g><rect x="12" y="0" width="1" height="13" fill="#5f5f5f"/></svg>
<div style="left:174px;top:287px;width:234px;height:1px;background:#dfe3e8"></div>
<div class="mi" style="top:294px">Нет гр<span class="u" style="position:static">а</span>ницы</div>
<svg style="left:147px;top:294px" width="14" height="15" viewBox="0 0 14 15" shape-rendering="crispEdges"><g fill="#6e6e6e"><rect x="0" y="0" width="1" height="1"/><rect x="0" y="2" width="1" height="1"/><rect x="0" y="4" width="1" height="1"/><rect x="0" y="6" width="1" height="1"/><rect x="0" y="8" width="1" height="1"/><rect x="0" y="10" width="1" height="1"/><rect x="0" y="12" width="1" height="1"/><rect x="2" y="0" width="1" height="1"/><rect x="2" y="6" width="1" height="1"/><rect x="2" y="12" width="1" height="1"/><rect x="4" y="0" width="1" height="1"/><rect x="4" y="6" width="1" height="1"/><rect x="4" y="12" width="1" height="1"/><rect x="6" y="0" width="1" height="1"/><rect x="6" y="2" width="1" height="1"/><rect x="6" y="4" width="1" height="1"/><rect x="6" y="6" width="1" height="1"/><rect x="6" y="8" width="1" height="1"/><rect x="6" y="10" width="1" height="1"/><rect x="6" y="12" width="1" height="1"/><rect x="8" y="0" width="1" height="1"/><rect x="8" y="6" width="1" height="1"/><rect x="8" y="12" width="1" height="1"/><rect x="10" y="0" width="1" height="1"/><rect x="10" y="6" width="1" height="1"/><rect x="10" y="12" width="1" height="1"/><rect x="12" y="0" width="1" height="1"/><rect x="12" y="2" width="1" height="1"/><rect x="12" y="4" width="1" height="1"/><rect x="12" y="6" width="1" height="1"/><rect x="12" y="8" width="1" height="1"/><rect x="12" y="10" width="1" height="1"/><rect x="12" y="12" width="1" height="1"/></g></svg>
<div class="mi" style="top:318px">В<span class="u" style="position:static">с</span>е границы</div>
<svg style="left:147px;top:318px" width="14" height="15" viewBox="0 0 14 15" shape-rendering="crispEdges"><g><rect x="0" y="0" width="13" height="1" fill="#5f5f5f"/><rect x="0" y="12" width="13" height="1" fill="#5f5f5f"/><rect x="0" y="0" width="1" height="13" fill="#5f5f5f"/><rect x="12" y="0" width="1" height="13" fill="#5f5f5f"/><rect x="6" y="0" width="1" height="13" fill="#5f5f5f"/><rect x="0" y="6" width="13" height="1" fill="#5f5f5f"/></g></svg>
<div class="mi" style="top:342px">Вне<span class="u" style="position:static">ш</span>ние границы</div>
<svg style="left:147px;top:342px" width="14" height="15" viewBox="0 0 14 15" shape-rendering="crispEdges"><g fill="#6e6e6e"><rect x="6" y="2" width="1" height="1"/><rect x="2" y="6" width="1" height="1"/><rect x="6" y="4" width="1" height="1"/><rect x="4" y="6" width="1" height="1"/><rect x="6" y="6" width="1" height="1"/><rect x="6" y="6" width="1" height="1"/><rect x="6" y="8" width="1" height="1"/><rect x="8" y="6" width="1" height="1"/><rect x="6" y="10" width="1" height="1"/><rect x="10" y="6" width="1" height="1"/></g><rect x="0" y="0" width="13" height="1" fill="#5f5f5f"/><rect x="0" y="12" width="13" height="1" fill="#5f5f5f"/><rect x="0" y="0" width="1" height="13" fill="#5f5f5f"/><rect x="12" y="0" width="1" height="13" fill="#5f5f5f"/></svg>
<div class="mi" style="top:366px">Толсты<span class="u" style="position:static">е</span> внешние границы</div>
<svg style="left:146px;top:365px" width="15" height="15" viewBox="-1 -1 15 15" shape-rendering="crispEdges"><g fill="#6e6e6e"><rect x="6" y="2" width="1" height="1"/><rect x="2" y="6" width="1" height="1"/><rect x="6" y="4" width="1" height="1"/><rect x="4" y="6" width="1" height="1"/><rect x="6" y="6" width="1" height="1"/><rect x="6" y="6" width="1" height="1"/><rect x="6" y="8" width="1" height="1"/><rect x="8" y="6" width="1" height="1"/><rect x="6" y="10" width="1" height="1"/><rect x="10" y="6" width="1" height="1"/></g><rect x="-1" y="-1" width="15" height="2" fill="#5f5f5f"/><rect x="-1" y="12" width="15" height="2" fill="#5f5f5f"/><rect x="-1" y="-1" width="2" height="15" fill="#5f5f5f"/><rect x="12" y="-1" width="2" height="15" fill="#5f5f5f"/></svg>
<div style="left:174px;top:385px;width:234px;height:1px;background:#dfe3e8"></div>
<div class="mi" style="top:392px">Сдвоенная н<span class="u" style="position:static">и</span>жняя граница</div>
<svg style="left:147px;top:392px" width="14" height="15" viewBox="0 0 14 15" shape-rendering="crispEdges"><g fill="#6e6e6e"><rect x="0" y="0" width="1" height="1"/><rect x="0" y="2" width="1" height="1"/><rect x="0" y="4" width="1" height="1"/><rect x="0" y="6" width="1" height="1"/><rect x="0" y="8" width="1" height="1"/><rect x="2" y="0" width="1" height="1"/><rect x="2" y="6" width="1" height="1"/><rect x="4" y="0" width="1" height="1"/><rect x="4" y="6" width="1" height="1"/><rect x="6" y="0" width="1" height="1"/><rect x="6" y="2" width="1" height="1"/><rect x="6" y="4" width="1" height="1"/><rect x="6" y="6" width="1" height="1"/><rect x="6" y="8" width="1" height="1"/><rect x="8" y="0" width="1" height="1"/><rect x="8" y="6" width="1" height="1"/><rect x="10" y="0" width="1" height="1"/><rect x="10" y="6" width="1" height="1"/><rect x="12" y="0" width="1" height="1"/><rect x="12" y="2" width="1" height="1"/><rect x="12" y="4" width="1" height="1"/><rect x="12" y="6" width="1" height="1"/><rect x="12" y="8" width="1" height="1"/></g><rect x="0" y="10" width="13" height="1" fill="#5f5f5f"/><rect x="0" y="12" width="13" height="1" fill="#5f5f5f"/></svg>
<div class="mi" style="top:416px"><span class="u" style="position:static">Т</span>олстая нижняя граница</div>
<svg style="left:147px;top:416px" width="14" height="15" viewBox="0 0 14 15" shape-rendering="crispEdges"><g fill="#6e6e6e"><rect x="0" y="0" width="1" height="1"/><rect x="0" y="2" width="1" height="1"/><rect x="0" y="4" width="1" height="1"/><rect x="0" y="6" width="1" height="1"/><rect x="0" y="8" width="1" height="1"/><rect x="0" y="10" width="1" height="1"/><rect x="2" y="0" width="1" height="1"/><rect x="2" y="6" width="1" height="1"/><rect x="4" y="0" width="1" height="1"/><rect x="4" y="6" width="1" height="1"/><rect x="6" y="0" width="1" height="1"/><rect x="6" y="2" width="1" height="1"/><rect x="6" y="4" width="1" height="1"/><rect x="6" y="6" width="1" height="1"/><rect x="6" y="8" width="1" height="1"/><rect x="6" y="10" width="1" height="1"/><rect x="8" y="0" width="1" height="1"/><rect x="8" y="6" width="1" height="1"/><rect x="10" y="0" width="1" height="1"/><rect x="10" y="6" width="1" height="1"/><rect x="12" y="0" width="1" height="1"/><rect x="12" y="2" width="1" height="1"/><rect x="12" y="4" width="1" height="1"/><rect x="12" y="6" width="1" height="1"/><rect x="12" y="8" width="1" height="1"/><rect x="12" y="10" width="1" height="1"/></g><rect x="0" y="12" width="13" height="2" fill="#5f5f5f"/></svg>
<div class="mi" style="top:440px">Верхняя и <span class="u" style="position:static">н</span>ижняя границы</div>
<svg style="left:147px;top:439px" width="14" height="15" viewBox="0 0 14 15" shape-rendering="crispEdges"><g fill="#6e6e6e"><rect x="0" y="2" width="1" height="1"/><rect x="0" y="4" width="1" height="1"/><rect x="0" y="6" width="1" height="1"/><rect x="0" y="8" width="1" height="1"/><rect x="0" y="10" width="1" height="1"/><rect x="2" y="6" width="1" height="1"/><rect x="4" y="6" width="1" height="1"/><rect x="6" y="2" width="1" height="1"/><rect x="6" y="4" width="1" height="1"/><rect x="6" y="6" width="1" height="1"/><rect x="6" y="8" width="1" height="1"/><rect x="6" y="10" width="1" height="1"/><rect x="8" y="6" width="1" height="1"/><rect x="10" y="6" width="1" height="1"/><rect x="12" y="2" width="1" height="1"/><rect x="12" y="4" width="1" height="1"/><rect x="12" y="6" width="1" height="1"/><rect x="12" y="8" width="1" height="1"/><rect x="12" y="10" width="1" height="1"/></g><rect x="0" y="0" width="13" height="2" fill="#5f5f5f"/><rect x="0" y="12" width="13" height="2" fill="#5f5f5f"/></svg>
<div class="mi" style="top:464px">Вер<span class="u" style="position:static">х</span>няя и толстая нижняя границы</div>
<svg style="left:147px;top:464px" width="14" height="15" viewBox="0 0 14 15" shape-rendering="crispEdges"><g fill="#6e6e6e"><rect x="0" y="2" width="1" height="1"/><rect x="0" y="4" width="1" height="1"/><rect x="0" y="6" width="1" height="1"/><rect x="0" y="8" width="1" height="1"/><rect x="0" y="10" width="1" height="1"/><rect x="2" y="6" width="1" height="1"/><rect x="4" y="6" width="1" height="1"/><rect x="6" y="2" width="1" height="1"/><rect x="6" y="4" width="1" height="1"/><rect x="6" y="6" width="1" height="1"/><rect x="6" y="8" width="1" height="1"/><rect x="6" y="10" width="1" height="1"/><rect x="8" y="6" width="1" height="1"/><rect x="10" y="6" width="1" height="1"/><rect x="12" y="2" width="1" height="1"/><rect x="12" y="4" width="1" height="1"/><rect x="12" y="6" width="1" height="1"/><rect x="12" y="8" width="1" height="1"/><rect x="12" y="10" width="1" height="1"/></g><rect x="0" y="0" width="13" height="1" fill="#5f5f5f"/><rect x="0" y="12" width="13" height="2" fill="#5f5f5f"/></svg>
<div class="mi" style="top:488px">Верхняя и сдвоенная нижняя границ<span class="u" style="position:static">ы</span></div>
<svg style="left:147px;top:488px" width="14" height="15" viewBox="0 0 14 15" shape-rendering="crispEdges"><g fill="#6e6e6e"><rect x="0" y="2" width="1" height="1"/><rect x="0" y="4" width="1" height="1"/><rect x="0" y="6" width="1" height="1"/><rect x="0" y="8" width="1" height="1"/><rect x="2" y="6" width="1" height="1"/><rect x="4" y="6" width="1" height="1"/><rect x="6" y="2" width="1" height="1"/><rect x="6" y="4" width="1" height="1"/><rect x="6" y="6" width="1" height="1"/><rect x="6" y="8" width="1" height="1"/><rect x="8" y="6" width="1" height="1"/><rect x="10" y="6" width="1" height="1"/><rect x="12" y="2" width="1" height="1"/><rect x="12" y="4" width="1" height="1"/><rect x="12" y="6" width="1" height="1"/><rect x="12" y="8" width="1" height="1"/></g><rect x="0" y="0" width="13" height="1" fill="#5f5f5f"/><rect x="0" y="10" width="13" height="1" fill="#5f5f5f"/><rect x="0" y="12" width="13" height="1" fill="#5f5f5f"/></svg>
<div style="left:142px;top:507px;width:266px;height:23px;background:#e9e9e9"></div>
<div class="t" style="left:150px;top:512px;font-size:12px;font-weight:bold;color:#595959">Нарисовать границы</div>
<div style="left:144px;top:532px;width:20px;height:20px;background:#c6c6c6;border:1px solid #999"></div>
<div class="mi" style="top:534.5px">Нарисоват<span class="u" style="position:static">ь</span> границу</div>
<svg style="left:146px;top:534px" width="17" height="16" viewBox="0 0 17 16"><rect x="1.6" y="2.6" width="11.8" height="11.8" fill="#fff" stroke="#606060" stroke-width="1.2"/><rect x="1" y="2" width="13" height="2.5" fill="#606060"/><path d="M4.5 4.5V14M9 9.5V14M1.6 9.5H13.4" stroke="#606060" stroke-width="1"/><path d="M6.8 10.8L14 3" stroke="#3d7fc1" stroke-width="2.6" stroke-linecap="round"/><path d="M5.3 12.6L6 10L7.8 11.6Z" fill="#3d7fc1"/></svg>
<div class="mi" style="top:559px">Нарис<span class="u" style="position:static">о</span>вать сетку</div>
<svg style="left:146px;top:557px" width="18" height="17" viewBox="0 0 18 17"><path d="M1.5 2V13.5H6M1.5 7.5H11M6.5 2V13" fill="none" stroke="#777" stroke-width="1"/><path d="M5 15.5L13.5 6L15.8 8.2L7.3 16.5L4.5 16.8Z" fill="#3d7fc1"/></svg>
<div class="mi" style="top:583px">Стереть границ<span class="u" style="position:static">у</span></div>
<svg style="left:146px;top:582px" width="16" height="15" viewBox="0 0 16 15"><path d="M9 1.5L14.5 6L8 12.5H4.5L1.5 9.5Z" fill="#e3798a"/><path d="M4.5 12.5L1.5 9.5L4.5 6.5L9.5 11Z" fill="#f0b3bd"/></svg>
<div class="mi" style="top:607px"><span class="u" style="position:static">Ц</span>вет линии</div>
<svg style="left:146px;top:604px" width="18" height="19" viewBox="0 0 18 19"><path d="M9 1.5H1.5V13.5H13V8" fill="none" stroke="#666" stroke-width="1"/><path d="M5.5 11.5L13.5 3L15.5 5L7.5 13L5 13.5Z" fill="#3d7fc1"/><rect x="0.5" y="15.5" width="16" height="3" fill="#f8c9a6"/></svg>
<svg style="left:395px;top:609px" width="5" height="9" viewBox="0 0 5 9"><path d="M0.3 0.8L4.6 4.5L0.3 8.2Z" fill="#666"/></svg>
<div class="mi" style="top:631px">Ти<span class="u" style="position:static">п</span> линии</div>
<svg style="left:395px;top:633px" width="5" height="9" viewBox="0 0 5 9"><path d="M0.3 0.8L4.6 4.5L0.3 8.2Z" fill="#666"/></svg>
<div style="left:174px;top:650px;width:234px;height:1px;background:#dfe3e8"></div>
<div class="mi" style="top:656.5px">Дру<span class="u" style="position:static">г</span>ие границы...</div>
<svg style="left:147px;top:657px" width="14" height="14" viewBox="0 0 14 14"><path d="M0.7 0.7H12.3V12.3H0.7ZM6.5 0.7V12.3M0.7 6.5H12.3" fill="none" stroke="#666" stroke-width="1.3"/></svg>
<div style="left:138px;top:523.5px;width:266.5px;height:38px;border:4px solid #f00;border-radius:12px;box-shadow:1px 3px 6px rgba(0,0,0,0.4), inset 1px 3px 6px rgba(0,0,0,0.3)"></div>
</body></html>
